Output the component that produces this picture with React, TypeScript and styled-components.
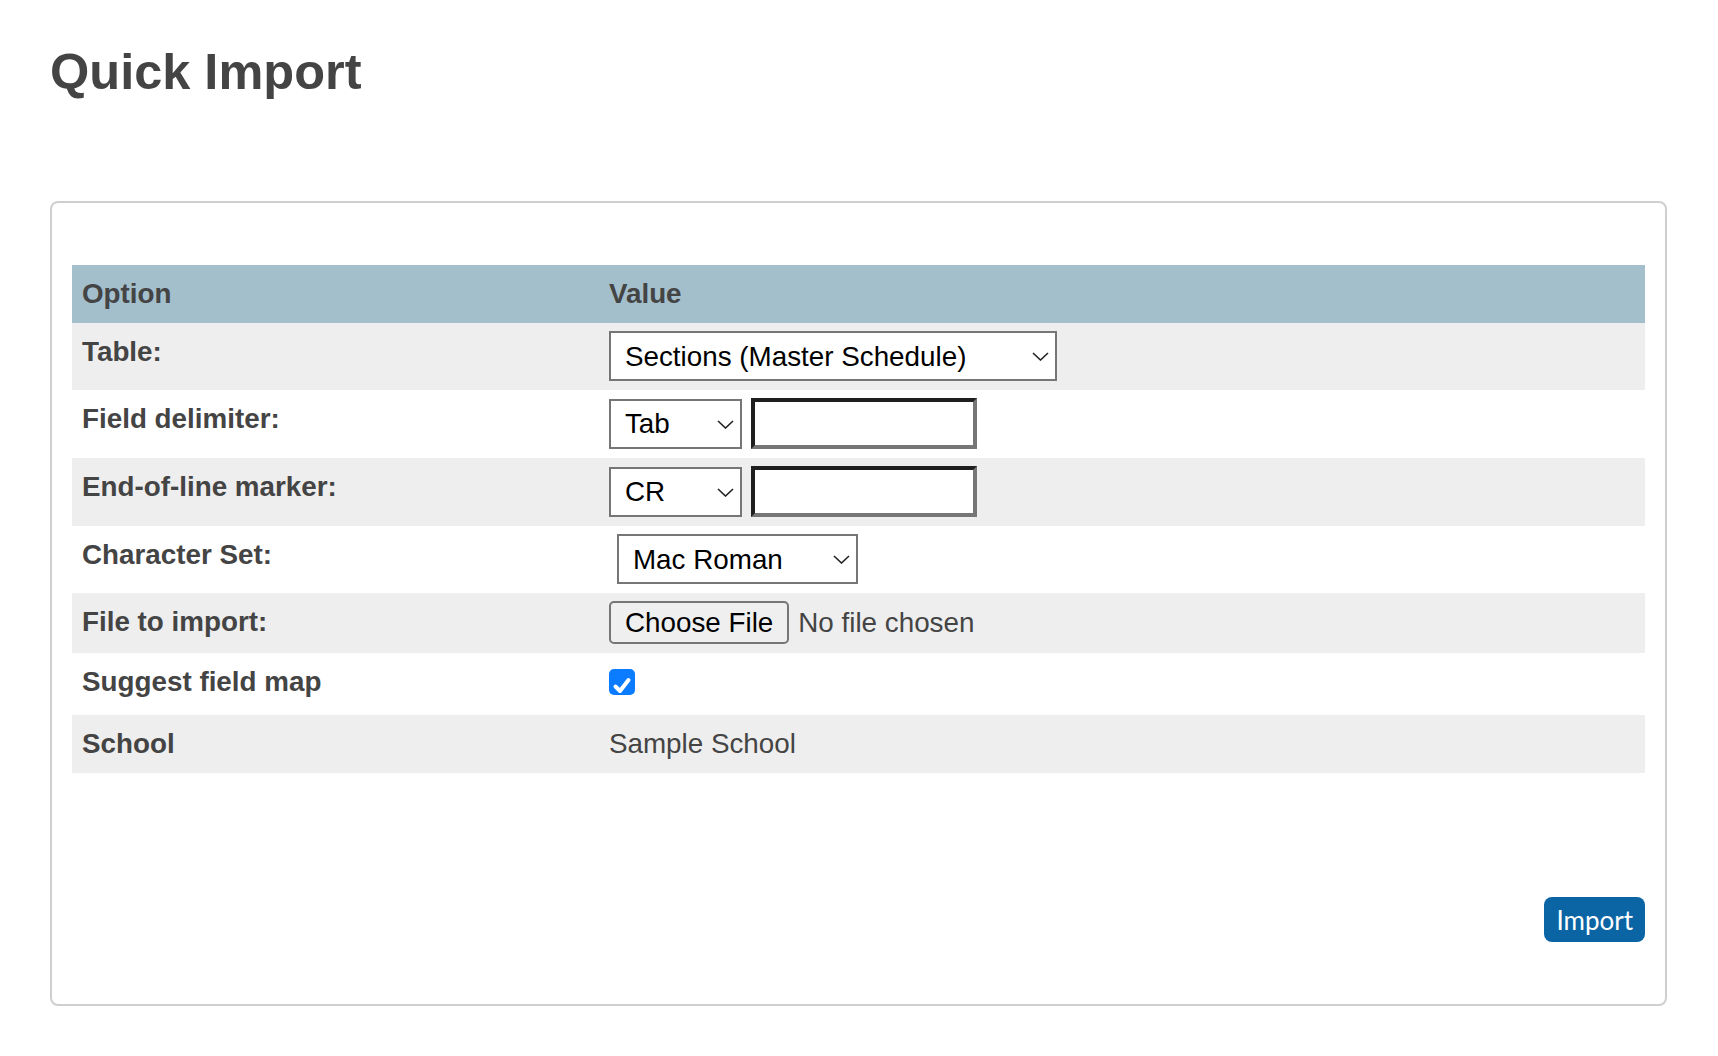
import React from "react";
import styled, { createGlobalStyle } from "styled-components";

const GlobalStyle = createGlobalStyle`
  html, body {
    margin: 0;
    padding: 0;
    background: #ffffff;
  }
  body {
    font-family: "Liberation Sans", Arial, sans-serif;
    color: #444444;
  }
`;

const Page = styled.div`
  padding: 43px 51px 40px 50px;
`;

const Title = styled.h1`
  margin: 0 0 100px;
  font-size: 50.5px;
  line-height: 58px;
  font-weight: 700;
  color: #444444;
`;

const Panel = styled.div`
  display: flex;
  flex-direction: column;
  border: 2px solid #cfcfcf;
  border-radius: 8px;
  padding: 62px 20px 62px;
`;

const OptionsTable = styled.table`
  width: 100%;
  border-collapse: collapse;
  font-size: 27.8px;
`;

const HeadCell = styled.th<{ $w?: string }>`
  width: ${(p) => p.$w || "auto"};
  background: #a3bfcc;
  text-align: left;
  padding: 8px 10px 9px;
  line-height: 41px;
  font-weight: 700;
  color: #444444;
`;

const Row = styled.tr<{ $shade?: boolean }>`
  background: ${(p) => (p.$shade ? "#eeeeee" : "#ffffff")};
`;

const LabelCell = styled.td`
  vertical-align: top;
  padding: 8px 10px 9px;
  line-height: 41px;
  font-weight: 700;
  color: #444444;
`;

const ValueCell = styled.td`
  vertical-align: top;
  padding: 8px 10px 9px;
  line-height: 41px;
  color: #444444;
`;

const Controls = styled.div<{ $indent?: number }>`
  display: flex;
  align-items: center;
  gap: 9px;
  margin-left: ${(p) => p.$indent || 0}px;
`;

const SelectWrap = styled.div`
  position: relative;
  display: inline-flex;
`;

const Select = styled.select<{ $w: number }>`
  appearance: none;
  -webkit-appearance: none;
  box-sizing: border-box;
  width: ${(p) => p.$w}px;
  height: 50px;
  margin: 0;
  padding: 0 0 0 14px;
  border: 2px solid #767676;
  border-radius: 0;
  background: #ffffff;
  color: #000000;
  font-family: "Liberation Sans", Arial, sans-serif;
  font-size: 27.8px;
  outline: none;
`;

const Chevron = styled.svg`
  position: absolute;
  right: 8px;
  top: 50%;
  width: 17px;
  height: 9px;
  margin-top: -4px;
  pointer-events: none;
`;

const TextBox = styled.input`
  box-sizing: border-box;
  width: 226px;
  height: 51px;
  margin: 0;
  padding: 0 6px;
  border-style: solid;
  border-width: 4px;
  border-color: #1f1f1f #767676 #767676 #1f1f1f;
  background: #ffffff;
  font-family: "Liberation Sans", Arial, sans-serif;
  font-size: 27.8px;
  outline: none;
`;

const FileButton = styled.button`
  box-sizing: border-box;
  height: 43px;
  padding: 0 14px;
  border: 2px solid #767676;
  border-radius: 5px;
  background: #efefef;
  color: #000000;
  font-family: "Liberation Sans", Arial, sans-serif;
  font-size: 27.8px;
  line-height: 1;
`;

const FileNote = styled.span`
  color: #444444;
  line-height: 43px;
`;

const CheckBox = styled.span`
  display: block;
  width: 26px;
  height: 26px;
  margin: 8px 0 11px;
  border-radius: 5px;
  background: #0b7bff;
`;

const Footer = styled.div`
  display: flex;
  justify-content: flex-end;
  margin-top: 124px;
`;

const ImportButton = styled.button`
  height: 45px;
  padding: 0 12px;
  border: none;
  border-radius: 8px;
  background: #0b65a5;
  color: #ffffff;
  font-family: Lato, "Open Sans", sans-serif;
  font-size: 26px;
  cursor: pointer;
`;

const Dropdown: React.FC<{ width: number; value: string }> = ({ width, value }) => (
  <SelectWrap>
    <Select $w={width} defaultValue={value}>
      <option>{value}</option>
    </Select>
    <Chevron viewBox="0 0 17 9">
      <path d="M1 1 L8.5 8 L16 1" fill="none" stroke="#222" strokeWidth="1.6" />
    </Chevron>
  </SelectWrap>
);

export default function App() {
  return (
    <Page>
      <GlobalStyle />
      <Title>Quick Import</Title>
      <Panel>
        <OptionsTable>
          <thead>
            <tr>
              <HeadCell $w="33.5%">Option</HeadCell>
              <HeadCell>Value</HeadCell>
            </tr>
          </thead>
          <tbody>
            <Row $shade>
              <LabelCell>Table:</LabelCell>
              <ValueCell>
                <Controls>
                  <Dropdown width={448} value="Sections (Master Schedule)" />
                </Controls>
              </ValueCell>
            </Row>
            <Row>
              <LabelCell>Field delimiter:</LabelCell>
              <ValueCell>
                <Controls>
                  <Dropdown width={133} value="Tab" />
                  <TextBox type="text" />
                </Controls>
              </ValueCell>
            </Row>
            <Row $shade>
              <LabelCell>End-of-line marker:</LabelCell>
              <ValueCell>
                <Controls>
                  <Dropdown width={133} value="CR" />
                  <TextBox type="text" />
                </Controls>
              </ValueCell>
            </Row>
            <Row>
              <LabelCell>Character Set:</LabelCell>
              <ValueCell>
                <Controls $indent={8}>
                  <Dropdown width={241} value="Mac Roman" />
                </Controls>
              </ValueCell>
            </Row>
            <Row $shade>
              <LabelCell>File to import:</LabelCell>
              <ValueCell>
                <Controls>
                  <FileButton type="button">Choose File</FileButton>
                  <FileNote>No file chosen</FileNote>
                </Controls>
              </ValueCell>
            </Row>
            <Row>
              <LabelCell>Suggest field map</LabelCell>
              <ValueCell>
                <CheckBox role="checkbox" aria-checked="true">
                  <svg width="26" height="26" viewBox="0 0 26 26">
                    <path
                      d="M6.5 13.5 L11 18 L19.5 7"
                      fill="none"
                      stroke="#fff"
                      strokeWidth="4"
                      strokeLinecap="round"
                      strokeLinejoin="round"
                    />
                  </svg>
                </CheckBox>
              </ValueCell>
            </Row>
            <Row $shade>
              <LabelCell>School</LabelCell>
              <ValueCell>Sample School</ValueCell>
            </Row>
          </tbody>
        </OptionsTable>
        <Footer>
          <ImportButton type="button">Import</ImportButton>
        </Footer>
      </Panel>
    </Page>
  );
}
